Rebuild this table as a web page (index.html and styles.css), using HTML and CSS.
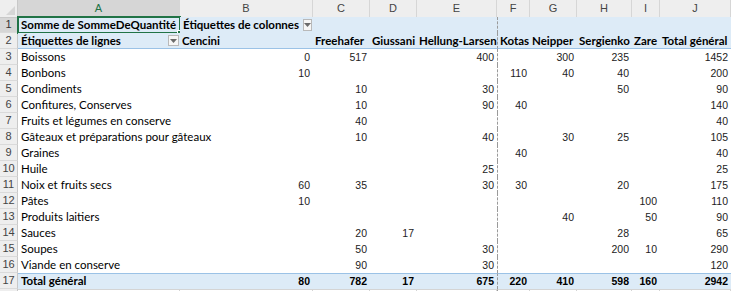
FILE: index.html
```html
<!DOCTYPE html>
<html lang="fr">
<head>
<meta charset="utf-8">
<title>Tableau croisé dynamique</title>
<link rel="stylesheet" href="styles.css">
</head>
<body>
<div class="sheet">
  <div class="row hdr">
    <div class="corner"><span class="tri"></span></div>
    <div class="ch sel">A</div><div class="ch">B</div><div class="ch">C</div><div class="ch">D</div><div class="ch">E</div><div class="ch">F</div><div class="ch">G</div><div class="ch">H</div><div class="ch">I</div><div class="ch">J</div>
  </div>
  <div class="row pv">
    <div class="rh rsel">1</div>
    <div class="c b a1">Somme de SommeDeQuantité<span class="selbox"><span class="handle"></span></span></div>
    <div class="c b ddcell">Étiquettes de colonnes<span class="dd"><svg width="7" height="4" viewBox="0 0 7 4"><path d="M0 0H7L3.5 4Z" fill="#6b6b6b"/></svg></span></div>
    <div class="c"></div><div class="c"></div><div class="c"></div><div class="c pb"></div><div class="c"></div><div class="c"></div><div class="c"></div><div class="c"></div>
  </div>
  <div class="row pv hd2">
    <div class="rh">2</div>
    <div class="c b ddcell sp">Étiquettes de lignes<span class="dd"><svg width="7" height="4" viewBox="0 0 7 4"><path d="M0 0H7L3.5 4Z" fill="#6b6b6b"/></svg></span></div>
    <div class="c b">Cencini</div><div class="c b">Freehafer</div><div class="c b">Giussani</div><div class="c b">Hellung-Larsen</div><div class="c b pb">Kotas</div><div class="c b">Neipper</div><div class="c b">Sergienko</div><div class="c b">Zare</div><div class="c b">Total général</div>
  </div>
  <div class="row"><div class="rh">3</div><div class="c">Boissons</div><div class="c n">0</div><div class="c n">517</div><div class="c n"></div><div class="c n">400</div><div class="c n pb"></div><div class="c n">300</div><div class="c n">235</div><div class="c n"></div><div class="c n">1452</div></div>
  <div class="row"><div class="rh">4</div><div class="c">Bonbons</div><div class="c n">10</div><div class="c n"></div><div class="c n"></div><div class="c n"></div><div class="c n pb">110</div><div class="c n">40</div><div class="c n">40</div><div class="c n"></div><div class="c n">200</div></div>
  <div class="row"><div class="rh">5</div><div class="c">Condiments</div><div class="c n"></div><div class="c n">10</div><div class="c n"></div><div class="c n">30</div><div class="c n pb"></div><div class="c n"></div><div class="c n">50</div><div class="c n"></div><div class="c n">90</div></div>
  <div class="row"><div class="rh">6</div><div class="c">Confitures, Conserves</div><div class="c n"></div><div class="c n">10</div><div class="c n"></div><div class="c n">90</div><div class="c n pb">40</div><div class="c n"></div><div class="c n"></div><div class="c n"></div><div class="c n">140</div></div>
  <div class="row"><div class="rh">7</div><div class="c">Fruits et légumes en conserve</div><div class="c n"></div><div class="c n">40</div><div class="c n"></div><div class="c n"></div><div class="c n pb"></div><div class="c n"></div><div class="c n"></div><div class="c n"></div><div class="c n">40</div></div>
  <div class="row"><div class="rh">8</div><div class="c">Gâteaux et préparations pour gâteaux</div><div class="c n"></div><div class="c n">10</div><div class="c n"></div><div class="c n">40</div><div class="c n pb"></div><div class="c n">30</div><div class="c n">25</div><div class="c n"></div><div class="c n">105</div></div>
  <div class="row"><div class="rh">9</div><div class="c">Graines</div><div class="c n"></div><div class="c n"></div><div class="c n"></div><div class="c n"></div><div class="c n pb">40</div><div class="c n"></div><div class="c n"></div><div class="c n"></div><div class="c n">40</div></div>
  <div class="row"><div class="rh">10</div><div class="c">Huile</div><div class="c n"></div><div class="c n"></div><div class="c n"></div><div class="c n">25</div><div class="c n pb"></div><div class="c n"></div><div class="c n"></div><div class="c n"></div><div class="c n">25</div></div>
  <div class="row"><div class="rh">11</div><div class="c">Noix et fruits secs</div><div class="c n">60</div><div class="c n">35</div><div class="c n"></div><div class="c n">30</div><div class="c n pb">30</div><div class="c n"></div><div class="c n">20</div><div class="c n"></div><div class="c n">175</div></div>
  <div class="row"><div class="rh">12</div><div class="c">Pâtes</div><div class="c n">10</div><div class="c n"></div><div class="c n"></div><div class="c n"></div><div class="c n pb"></div><div class="c n"></div><div class="c n"></div><div class="c n">100</div><div class="c n">110</div></div>
  <div class="row"><div class="rh">13</div><div class="c">Produits laitiers</div><div class="c n"></div><div class="c n"></div><div class="c n"></div><div class="c n"></div><div class="c n pb"></div><div class="c n">40</div><div class="c n"></div><div class="c n">50</div><div class="c n">90</div></div>
  <div class="row"><div class="rh">14</div><div class="c">Sauces</div><div class="c n"></div><div class="c n">20</div><div class="c n">17</div><div class="c n"></div><div class="c n pb"></div><div class="c n"></div><div class="c n">28</div><div class="c n"></div><div class="c n">65</div></div>
  <div class="row"><div class="rh">15</div><div class="c">Soupes</div><div class="c n"></div><div class="c n">50</div><div class="c n"></div><div class="c n">30</div><div class="c n pb"></div><div class="c n"></div><div class="c n">200</div><div class="c n">10</div><div class="c n">290</div></div>
  <div class="row"><div class="rh">16</div><div class="c">Viande en conserve</div><div class="c n"></div><div class="c n">90</div><div class="c n"></div><div class="c n">30</div><div class="c n pb"></div><div class="c n"></div><div class="c n"></div><div class="c n"></div><div class="c n">120</div></div>
  <div class="row tot"><div class="rh">17</div><div class="c b">Total général</div><div class="c n b">80</div><div class="c n b">782</div><div class="c n b">17</div><div class="c n b">675</div><div class="c n b pb">220</div><div class="c n b">410</div><div class="c n b">598</div><div class="c n b">160</div><div class="c n b">2942</div></div>
  <div class="row empty"><div class="rh"></div><div class="c g"></div><div class="c g"></div><div class="c g"></div><div class="c g"></div><div class="c g"></div><div class="c g pb"></div><div class="c g"></div><div class="c g"></div><div class="c g"></div><div class="c g"></div></div>
</div>
</body>
</html>
```

FILE: styles.css
```css
* { box-sizing: border-box; }
html, body { margin: 0; padding: 0; background: #ffffff; }
body { font-family: "Lato", "Liberation Sans", sans-serif; font-size: 11.5px; color: #000; overflow: hidden; }

.sheet { width: 731px; }

.row {
  display: grid;
  grid-template-columns: 18px 162px 133px 57px 47px 80px 33px 47px 55px 28px 71px;
  height: 16px;
}
.row.hdr { height: 17px; }

/* column headers */
.corner {
  background: #eeeeee;
  border-right: 1px solid #c8c8c8;
  border-bottom: 1px solid #c8c8c8;
  position: relative;
}
.corner .tri {
  position: absolute;
  right: 2px;
  bottom: 2px;
  width: 0;
  height: 0;
  border-left: 9px solid transparent;
  border-bottom: 9px solid #d6d6d6;
}
.ch {
  background: #eeeeee;
  border-right: 1px solid #d6d6d6;
  border-bottom: 1px solid #c8c8c8;
  text-align: center;
  font-family: "Liberation Sans", sans-serif;
  font-size: 11px;
  line-height: 16px;
  color: #444444;
}
.ch.sel {
  background: #d6d6d6;
  color: #217346;
  border-bottom: 2px solid #217346;
}

/* row headers */
.rh {
  background: #eeeeee;
  border-right: 1px solid #c8c8c8;
  border-bottom: 1px solid #dadada;
  text-align: center;
  font-family: "Liberation Sans", sans-serif;
  font-size: 11px;
  line-height: 15px;
  color: #444444;
}
.rh.rsel { background: #d6d6d6; color: #333333; }

/* cells */
.c {
  padding: 0 2px 0 3px;
  line-height: 16px;
  white-space: nowrap;
  position: relative;
}
.c.n {
  text-align: right;
  padding: 0 3px 0 2px;
  font-family: "Liberation Sans", sans-serif;
  font-size: 10.5px;
  color: #222222;
}
.c.b { font-weight: 700; }
.pb { border-left: 1px dashed #9a9a9a; }

/* pivot header rows */
.row.pv .c { background: #ddebf7; }
.row.hd2 .c { border-bottom: 1px solid #9bc2e6; line-height: 15px; }
.row.hd2 .c.b { padding-left: 2px; }
.row.hd2 .c.sp { padding-left: 3px; padding-right: 1px; }

.ddcell { display: flex; align-items: center; }
.ddcell.sp { justify-content: space-between; }
.dd {
  display: inline-flex;
  align-items: center;
  justify-content: center;
  width: 12px;
  height: 12px;
  border: 1px solid #b9b9b9;
  background: #f6f6f6;
  margin-left: 4px;
}
.ddcell.sp .dd { width: 11px; height: 11px; }

/* active cell */
.a1 { overflow: visible; }
.selbox {
  position: absolute;
  left: -1px;
  top: -1px;
  right: -1px;
  bottom: -1px;
  border: 2px solid #217346;
  pointer-events: none;
}
.handle {
  position: absolute;
  right: -4px;
  bottom: -4px;
  width: 6px;
  height: 6px;
  background: #217346;
  border: 1px solid #ffffff;
}

/* totals row */
.row.tot .c { background: #ddebf7; border-top: 1px solid #9bc2e6; line-height: 14px; }
.row.tot .c.n { color: #000; }

/* empty row below */
.row.empty .c.g { border-right: 1px solid #d4d4d4; border-top: 1px solid #d4d4d4; }
```
